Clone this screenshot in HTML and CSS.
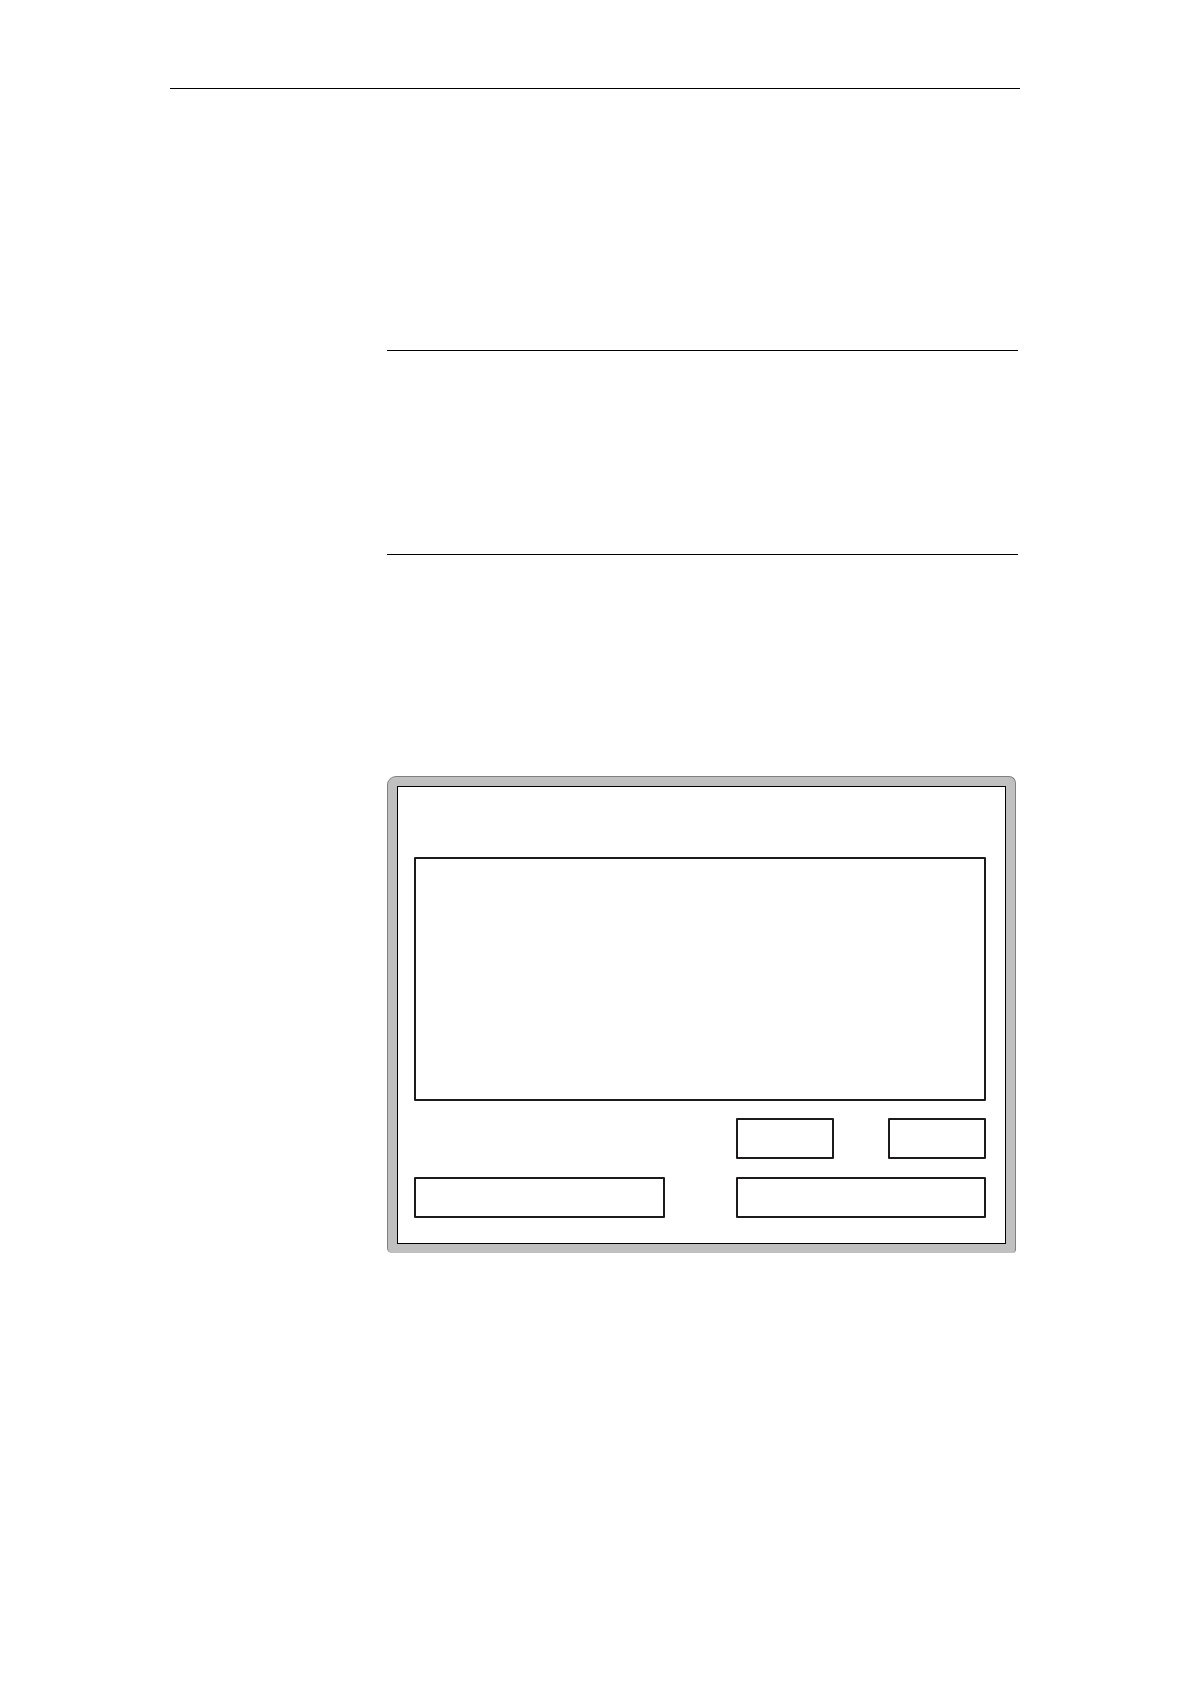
FILE: index.html
```html
<!DOCTYPE html>
<html lang="en">
<head>
<meta charset="utf-8">
<meta name="viewport" content="width=device-width, initial-scale=1">
<title>Screen layout</title>
<link rel="stylesheet" href="styles.css">
</head>
<body>
<header class="page-header"></header>
<main class="content">
  <section class="note"></section>
  <figure class="panel">
    <div class="screen">
      <div class="box display"></div>
      <div class="fields">
        <div class="row">
          <div class="pair">
            <div class="box"></div>
            <div class="box"></div>
          </div>
        </div>
        <div class="row">
          <div class="box"></div>
          <div class="box"></div>
        </div>
      </div>
    </div>
  </figure>
</main>
</body>
</html>
```
FILE: styles.css
```css
* {
  box-sizing: border-box;
}

body {
  margin: 0;
  padding: 88px 170px;
  background: #fff;
  color: #000;
  font-family: "Liberation Sans", Arial, sans-serif;
}

.page-header {
  border-top: 1px solid #000;
}

.content {
  display: flex;
  flex-direction: column;
  gap: 221px;
  margin-left: 217px;
  padding-top: 261px;
}

.note {
  min-height: 205px;
  margin-right: 2px;
  border-top: 1px solid #000;
  border-bottom: 1px solid #000;
}

.panel {
  margin: 0 4px 0 0;
  padding: 9px;
  border: 1px solid #808080;
  border-bottom: 0;
  border-radius: 9px 7px 4px 5px;
  background: #c0c0c0;
}

.screen {
  display: flex;
  flex-direction: column;
  gap: 17px;
  padding: 70px 19px 25px 16px;
  border: 1px solid #000;
  background: #fff;
}

.fields {
  display: grid;
  row-gap: 18px;
}

.box {
  min-height: 41px;
  border: 2px solid #1c1a1b;
  border-radius: 1px;
}

.display {
  min-height: 244px;
}

.row {
  display: grid;
  grid-template-columns: 251fr 250fr;
  column-gap: 71px;
}

.pair {
  display: grid;
  grid-column: 2;
  grid-template-columns: 1fr 1fr;
  column-gap: 54px;
}
```
